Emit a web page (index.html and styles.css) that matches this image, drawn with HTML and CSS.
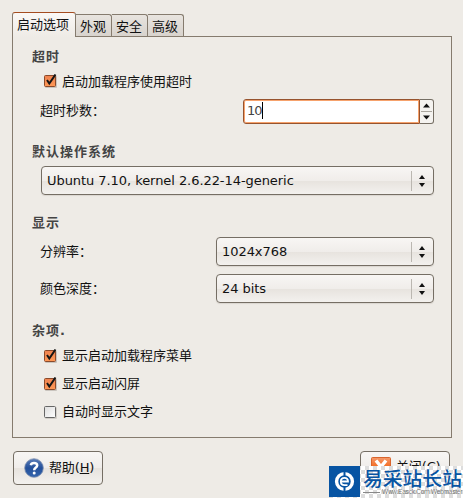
FILE: index.html
```html
<!DOCTYPE html>
<html lang="zh-CN">
<head>
    <meta charset="UTF-8">
    <title>启动选项</title>
    <link rel="stylesheet" href="styles.css">
</head>
<body>
    <div class="tabs">
        <div class="tab active">启动选项</div>
        <div class="tab">外观</div>
        <div class="tab">安全</div>
        <div class="tab">高级</div>
    </div>
    <div class="panel">
        <h2>超时</h2>
        <div class="check-row first">
            <svg class="check" viewBox="0 0 14 15"><use href="#checked"/></svg>
            <span>启动加载程序使用超时</span>
        </div>
        <div class="row timeout">
            <span>超时秒数：</span>
            <div class="spin">
                <div class="spin-input">10<i class="caret"></i></div>
                <svg class="spin-buttons" viewBox="0 0 13 23">
                    <path d="M3 7.500h7L6.500 3.500z M3 15.500h7L6.500 19.500z" fill="#111"/>
                    <path d="M1 11.500h11" stroke="#aaa69e"/>
                </svg>
            </div>
        </div>
        <h2 class="os-title">默认操作系统</h2>
        <div class="select os">
            <span>Ubuntu 7.10, kernel 2.6.22-14-generic</span>
            <svg class="arrows" viewBox="0 0 22 20"><use href="#arrows"/></svg>
        </div>
        <h2 class="display-title">显示</h2>
        <div class="row">
            <span>分辨率：</span>
            <div class="select small">
                <span>1024x768</span>
                <svg class="arrows" viewBox="0 0 22 20"><use href="#arrows"/></svg>
            </div>
        </div>
        <div class="row depth">
            <span>颜色深度：</span>
            <div class="select small">
                <span>24 bits</span>
                <svg class="arrows" viewBox="0 0 22 20"><use href="#arrows"/></svg>
            </div>
        </div>
        <h2 class="misc-title">杂项.</h2>
        <div class="check-row misc">
            <svg class="check" viewBox="0 0 14 15"><use href="#checked"/></svg>
            <span>显示启动加载程序菜单</span>
        </div>
        <div class="check-row">
            <svg class="check" viewBox="0 0 14 15"><use href="#checked"/></svg>
            <span>显示启动闪屏</span>
        </div>
        <div class="check-row">
            <svg class="check" viewBox="0 0 14 15"><use href="#unchecked"/></svg>
            <span>自动时显示文字</span>
        </div>
    </div>
    <div class="buttons">
        <div class="button help">
            <svg class="help-icon" viewBox="0 0 20 20">
                <circle cx="10" cy="10" r="9.300" fill="url(#blue)" stroke="#7f8fae" stroke-width=".8"/>
                <path d="M6.800 7.200Q7.300 5 10 5Q13.200 5 13.200 7.500Q13.200 8.800 11.500 9.800Q10.200 10.600 10.200 12.200" fill="none" stroke="#fff" stroke-width="2.500"/>
                <circle cx="10.200" cy="15" r="1.500" fill="#fff"/>
            </svg>
            <span>帮助(<u>H</u>)</span>
        </div>
        <div class="button close">
            <svg class="close-icon" viewBox="0 0 20 20">
                <rect x=".5" y=".5" width="19" height="19" rx="1" fill="url(#close-orange)" stroke="#d9642c"/>
                <path d="M5 3.500L15 16M15 3.500L5 16" stroke="#fff" stroke-width="3.500"/>
            </svg>
            <span>关闭(<u>C</u>)</span>
        </div>
    </div>

    <div class="watermark">
        <svg class="logo" viewBox="0 0 31 31">
            <rect width="31" height="31" fill="#0754a3"/>
            <circle cx="15.500" cy="15.500" r="7.900" fill="none" stroke="#fff" stroke-width="3.400"/>
            <path d="M15.500 4v6M15.500 21v6" stroke="#0754a3" stroke-width="2"/>
            <path d="M11.500 15.500H19Q19 11.800 15.500 11.800Q11.800 11.800 11.800 15.500Q11.800 19.200 15.500 19.200H18.500" fill="none" stroke="#fff" stroke-width="1.800"/>
        </svg>
        <div class="site">
            <div class="site-name">易采站长站</div>
            <div class="site-url">Www.Easck.Com Webmaster</div>
        </div>
    </div>

    <svg class="defs">
        <defs>
            <linearGradient id="orange" x2="0" y2="1">
                <stop stop-color="#ee8250"/>
                <stop offset="1" stop-color="#ff9855"/>
            </linearGradient>
            <linearGradient id="close-orange" x2="0" y2="1">
                <stop stop-color="#f59a6c"/>
                <stop offset=".5" stop-color="#f36b20"/>
                <stop offset="1" stop-color="#f57c28"/>
            </linearGradient>
            <linearGradient id="blue" x2="0" y2="1">
                <stop stop-color="#5b7db8"/>
                <stop offset=".5" stop-color="#24509a"/>
                <stop offset="1" stop-color="#3465ad"/>
            </linearGradient>
            <linearGradient id="grey" x2="1" y2="1">
                <stop stop-color="#ddd"/>
                <stop offset="1" stop-color="#fff"/>
            </linearGradient>
            <symbol id="checked" viewBox="0 0 14 15">
                <rect x="1" y="2" width="12" height="12" rx="1" fill="#c9c4be"/>
                <rect x=".5" y="1.500" width="11" height="11" rx="1" fill="url(#orange)" stroke="#8a4a2b"/>
                <path d="M3 6L5.300 9.500L11.500 .5" fill="none" stroke="#151515" stroke-width="2"/>
            </symbol>
            <symbol id="unchecked" viewBox="0 0 14 15">
                <rect x="1" y="2" width="12" height="12" rx="1" fill="#d2cec8"/>
                <rect x=".5" y="1.500" width="11" height="11" rx="1" fill="url(#grey)" stroke="#666"/>
            </symbol>
            <symbol id="arrows" viewBox="0 0 22 20">
                <path d="M.5 0v20" stroke="#bbb7b1"/>
                <path d="M8 8h6L11 4z M8 12h6L11 16z" fill="#111"/>
            </symbol>
        </defs>
    </svg>
</body>
</html>
```
FILE: styles.css
```css
* {
    box-sizing: border-box;
}
body {
    margin: 0;
    padding: 12px 11px 0 12px;
    height: 498px;
    overflow: hidden;
    position: relative;
    background: #eeebe6;
    color: #111;
    font: 13px/18px "DejaVu Sans", "Noto Sans CJK SC", sans-serif;
    white-space: nowrap;
}
.tabs {
    display: flex;
    align-items: flex-end;
    height: 24px;
}
.tab {
    width: 36px;
    height: 22px;
    padding: 3px 0 0 4px;
    border: 1px solid #857b6e;
    border-width: 1px 1px 0 0;
    border-radius: 0 3px 0 0;
    background: linear-gradient(#e8e4df, #d8d3cd);
}
.tab.active {
    width: 64px;
    height: 25px;
    padding: 3px 0 0 4px;
    margin-bottom: -1px;
    position: relative;
    border-left-width: 1px;
    border-top-color: #a44c20;
    border-radius: 3px 3px 0 0;
    background: linear-gradient(#faf8f6, #eeebe6);
}
.panel {
    width: 440px;
    height: 402px;
    border: 1px solid #857b6e;
    padding: 11px 17px 0 19px;
}
h2 {
    margin: 0;
    height: 18px;
    font-size: 13px;
    line-height: 18px;
    letter-spacing: 1px;
    color: #444;
}
.check-row {
    display: flex;
    align-items: center;
    gap: 4px;
    height: 28px;
    padding-left: 12px;
}
.check-row.first {
    padding-top: 3px;
}
.check-row.misc {
    margin-top: 2px;
}
.check {
    width: 14px;
    height: 15px;
}
.row {
    display: flex;
    align-items: center;
    justify-content: space-between;
    padding-left: 8px;
}
.timeout {
    height: 26px;
    margin-top: 4px;
}
.spin {
    display: flex;
    width: 191px;
    height: 25px;
}
.spin-input {
    width: 177px;
    padding: 2px 0 0 3px;
    border: 1px solid #96532e;
    border-radius: 3px 0 0 3px;
    box-shadow: inset 0 0 0 1px #f6a26c;
    background: #fff;
    color: #444;
    letter-spacing: -1px;
}
.caret {
    display: inline-block;
    width: 1px;
    height: 17px;
    background: #000;
    vertical-align: -4px;
}
.spin-buttons {
    width: 14px;
    height: 25px;
    border: 1px solid #756e64;
    border-left: 0;
    border-radius: 0 3px 3px 0;
    background: #f5f3f0;
}
.os-title {
    margin-top: 19px;
}
.select {
    display: flex;
    align-items: center;
    justify-content: space-between;
    height: 29px;
    padding: 0 0 0 5px;
    border: 1px solid #756e64;
    border-radius: 4px;
    background: linear-gradient(#f8f6f4, #f0edea 50%, #e7e3de 51%, #f3f1ee);
    box-shadow: 0 1px 1px #dad6d0;
}
.select span {
    letter-spacing: -.06px;
}
.arrows {
    width: 22px;
    height: 20px;
}
.os {
    margin: 5px 0 0 9px;
}
.display-title {
    margin-top: 19px;
}
.small {
    width: 218px;
}
.display-title + .row {
    margin-top: 5px;
}
.depth {
    margin-top: 8px;
}
.misc-title {
    margin-top: 19px;
}
.buttons {
    display: flex;
    justify-content: space-between;
    margin: 13px 2px 0 1px;
}
.button {
    display: flex;
    align-items: center;
    gap: 5px;
    width: 90px;
    height: 34px;
    padding-left: 10px;
    border: 1px solid #756e64;
    border-radius: 4px;
    background: linear-gradient(#f8f6f4, #f0edea 50%, #e7e3de 51%, #f3f1ee);
}
.button span {
    letter-spacing: -.15px;
}
.help-icon,
.close-icon {
    flex: none;
    width: 20px;
    height: 20px;
}
.close {
    padding-bottom: 3px;
}
.watermark {
    position: absolute;
    left: 329px;
    top: 466px;
    display: flex;
    width: 134px;
    height: 32px;
    background: repeating-conic-gradient(#ddd 0 25%, #fff 0 50%) 0 0 / 8px 8px;
}
.logo {
    flex: none;
    width: 31px;
    height: 31px;
}
.site {
    flex: none;
    width: 103px;
    padding-left: 3px;
    color: #0754a3;
}
.site-name {
    font: 500 19.800px/23px "Noto Sans CJK SC", sans-serif;
}
.site-url {
    display: flex;
    align-items: center;
    gap: 2px;
    font: 6.400px/6px "Liberation Sans", sans-serif;
    letter-spacing: -.15px;
    color: #777;
}
.site-url::before {
    content: "";
    flex: none;
    width: 17px;
    height: 1px;
    background: #888;
}
.defs {
    position: absolute;
    width: 0;
    height: 0;
}
```
